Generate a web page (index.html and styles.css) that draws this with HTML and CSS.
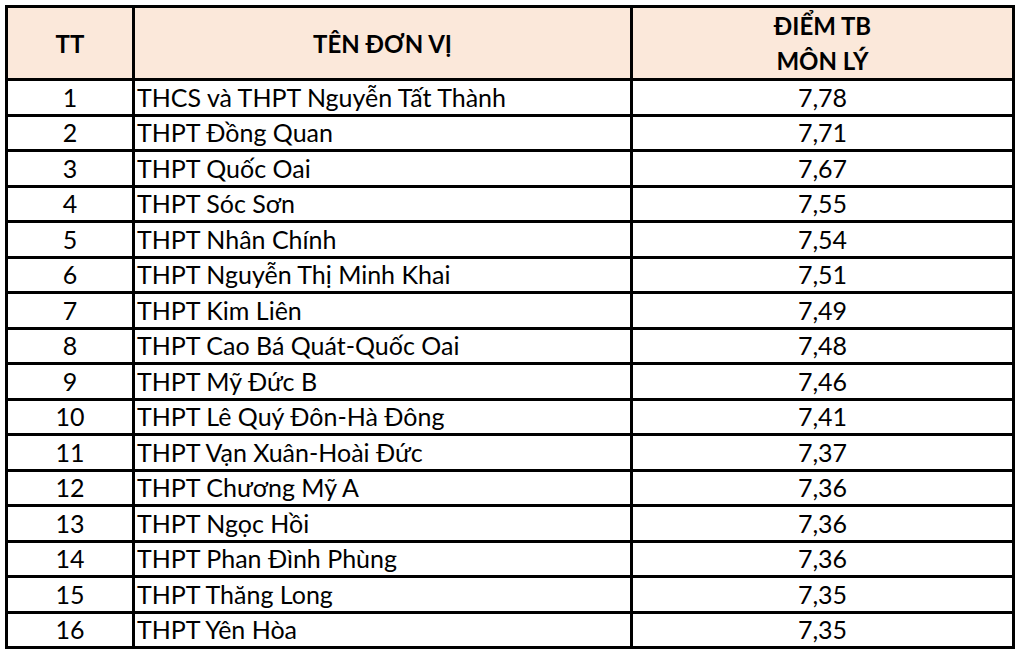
FILE: index.html
```html
<!DOCTYPE html>
<html lang="vi">
<head>
<meta charset="utf-8">
<link rel="stylesheet" href="styles.css">
</head>
<body>
<table class="grid">
  <thead>
    <tr class="head">
      <th class="c-tt">TT</th>
      <th class="c-name">TÊN ĐƠN VỊ</th>
      <th class="c-score">ĐIỂM TB<br>MÔN LÝ</th>
    </tr>
  </thead>
  <tbody>
    <tr><td class="c-tt">1</td><td class="c-name">THCS và THPT Nguyễn Tất Thành</td><td class="c-score">7,78</td></tr>
    <tr><td class="c-tt">2</td><td class="c-name">THPT Đồng Quan</td><td class="c-score">7,71</td></tr>
    <tr><td class="c-tt">3</td><td class="c-name">THPT Quốc Oai</td><td class="c-score">7,67</td></tr>
    <tr><td class="c-tt">4</td><td class="c-name">THPT Sóc Sơn</td><td class="c-score">7,55</td></tr>
    <tr><td class="c-tt">5</td><td class="c-name">THPT Nhân Chính</td><td class="c-score">7,54</td></tr>
    <tr><td class="c-tt">6</td><td class="c-name">THPT Nguyễn Thị Minh Khai</td><td class="c-score">7,51</td></tr>
    <tr><td class="c-tt">7</td><td class="c-name">THPT Kim Liên</td><td class="c-score">7,49</td></tr>
    <tr><td class="c-tt">8</td><td class="c-name">THPT Cao Bá Quát-Quốc Oai</td><td class="c-score">7,48</td></tr>
    <tr><td class="c-tt">9</td><td class="c-name">THPT Mỹ Đức B</td><td class="c-score">7,46</td></tr>
    <tr><td class="c-tt">10</td><td class="c-name">THPT Lê Quý Đôn-Hà Đông</td><td class="c-score">7,41</td></tr>
    <tr><td class="c-tt">11</td><td class="c-name">THPT Vạn Xuân-Hoài Đức</td><td class="c-score">7,37</td></tr>
    <tr><td class="c-tt">12</td><td class="c-name">THPT Chương Mỹ A</td><td class="c-score">7,36</td></tr>
    <tr><td class="c-tt">13</td><td class="c-name">THPT Ngọc Hồi</td><td class="c-score">7,36</td></tr>
    <tr><td class="c-tt">14</td><td class="c-name">THPT Phan Đình Phùng</td><td class="c-score">7,36</td></tr>
    <tr><td class="c-tt">15</td><td class="c-name">THPT Thăng Long</td><td class="c-score">7,35</td></tr>
    <tr><td class="c-tt">16</td><td class="c-name">THPT Yên Hòa</td><td class="c-score">7,35</td></tr>
  </tbody>
</table>
</body>
</html>
```

FILE: styles.css
```css
html, body {
  margin: 0;
  padding: 0;
  background: #ffffff;
}

body {
  padding: 5px 0 0 5px;
  font-family: Lato, "Noto Sans", sans-serif;
  color: #000000;
}

.grid {
  border-collapse: separate;
  border-spacing: 0;
  border-top: 3px solid #000;
  border-left: 3px solid #000;
  table-layout: fixed;
  width: 1010px;
}

.grid th,
.grid td {
  border-right: 3px solid #000;
  border-bottom: 3px solid #000;
  padding: 0;
  white-space: nowrap;
  overflow: hidden;
}

.head th {
  background: #fbe8da;
  font-weight: 700;
  font-size: 24px;
  height: 69px;
  line-height: 35px;
  text-align: center;
  vertical-align: middle;
}

.grid tbody td {
  font-size: 25px;
  height: 32.5px;
  line-height: 31px;
  vertical-align: middle;
}

.c-tt {
  width: 124px;
  text-align: center;
}

.c-name {
  width: 495px;
  text-align: left;
}

.grid td.c-name {
  padding-left: 2px;
}

.grid th.c-name {
  padding-left: 0;
  text-align: center;
}

.c-score {
  width: 379px;
  text-align: center;
}
```
